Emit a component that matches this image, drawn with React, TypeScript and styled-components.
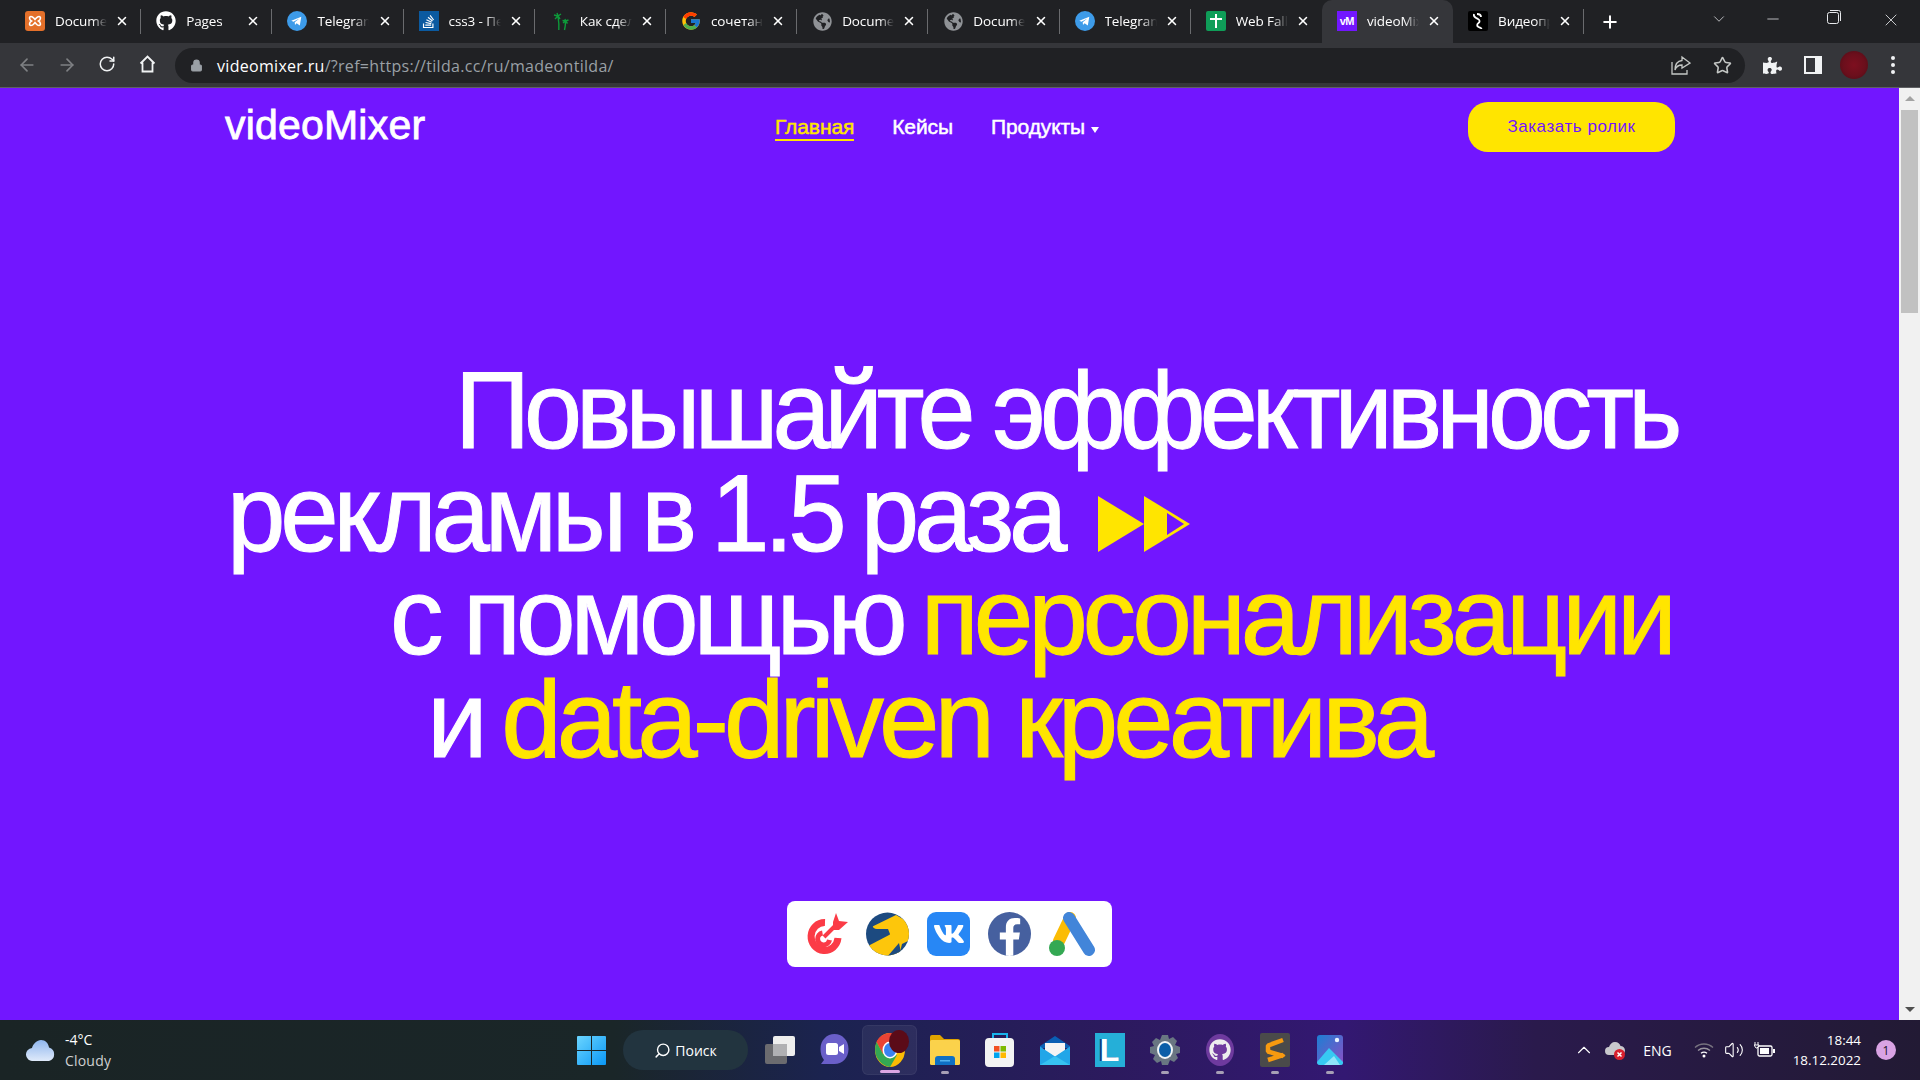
import React from "react";
import styled, { createGlobalStyle } from "styled-components";
import { FaGithub, FaVk, FaFacebookF, FaStackOverflow, FaGlobeAmericas, FaPuzzlePiece } from "react-icons/fa";
import { ArrowLeft, ArrowRight, RotateCw, Lock, Star, Plus, X, ChevronDown, ChevronUp, Minus, Volume2, Search } from "lucide-react";

const Global = createGlobalStyle`
  html, body { margin: 0; padding: 0; background: #7216ff; overflow: hidden; }
  * { box-sizing: border-box; }
`;
const Shell = styled.div`
  width: 1920px; height: 1080px; display: flex; flex-direction: column; overflow: hidden;
  font-family: "Open Sans", "Liberation Sans", sans-serif;
`;
const TabStrip = styled.div`
  height: 43px; background: #202124; display: flex; align-items: stretch; padding-left: 10px; flex: none;
`;
const Tab = styled.div<{ $active?: boolean; $sep?: boolean }>`
  width: 131.2px; flex: none; position: relative; display: flex; align-items: center; padding: 0 15px 1px 15px;
  color: #fff; font-size: 13.5px; background: ${p => (p.$active ? "#35363a" : "transparent")};
  border-radius: ${p => (p.$active ? "10px 10px 0 0" : "0")};
  &::after {
    content: ""; position: absolute; right: 0; top: 9px; height: 25px; width: 1px;
    background: ${p => (p.$sep ? "#6a6b6e" : "transparent")};
  }
`;
const Fav = styled.span`
  width: 20px; height: 20px; flex: none; display: flex; align-items: center; justify-content: center; margin-right: 10px;
`;
const TabTitle = styled.span`
  width: 52px; flex: none; overflow: hidden; white-space: nowrap; letter-spacing: -0.1px;
  -webkit-mask-image: linear-gradient(90deg, #000 72%, transparent 100%);
  mask-image: linear-gradient(90deg, #000 72%, transparent 100%);
`;
const TabClose = styled.span`
  display: flex; margin-left: auto; color: #fff; margin-right: -3px;
`;
const NewTab = styled.span`
  display: flex; align-items: center; margin-left: 16px; color: #fff;
`;
const WinControls = styled.div`
  margin-left: auto; display: flex; color: #e8eaed; align-items: flex-start; padding-top: 10px;
`;
const WinBtn = styled.span<{ $w: number }>`
  width: ${p => p.$w}px; display: flex; justify-content: center;
`;
const Toolbar = styled.div`
  height: 45px; background: #35363a; border-bottom: 1px solid #5f6063; display: flex; align-items: center; flex: none;
`;
const NavBtn = styled.span<{ $dim?: boolean }>`
  width: 40px; display: flex; justify-content: center; color: ${p => (p.$dim ? "#7f8184" : "#f1f3f4")};
`;
const NavButtons = styled.div`
  display: flex; padding-left: 7px; width: 175px;
`;
const Omnibox = styled.div`
  width: 1570px; height: 35px; border-radius: 18px; background: #202124; display: flex; align-items: center;
  padding: 0 13px 0 15px; font-size: 16px; color: #9aa0a6; flex: none;
`;
const Url = styled.span`
  margin-left: 14px; letter-spacing: 0.3px; white-space: nowrap; padding-top: 1px;
  b { font-weight: 400; color: #fff; }
`;
const OmniIcons = styled.div`
  margin-left: auto; display: flex; gap: 22px; align-items: center; color: #c4c7c5;
`;
const ToolIcons = styled.div`
  display: flex; align-items: center; margin-left: 18px; color: #f1f3f4; gap: 22px;
`;
const Avatar = styled.span`
  width: 28px; height: 28px; border-radius: 50%; margin-left: -4px;
  background: radial-gradient(circle, #7e0f1f 0%, #6b0f1c 55%, #4a0b14 100%);
`;
const Dots = styled.span`
  display: flex; flex-direction: column; gap: 3px; margin-left: 1px;
  i { width: 4px; height: 4px; border-radius: 50%; background: #f1f3f4; display: block; }
`;
const Viewport = styled.div`
  flex: 1; display: flex; background: #7216ff; min-height: 0;
`;
const Page = styled.main`
  flex: 1; min-width: 0; display: flex; flex-direction: column; padding: 14px 224px 0 225px; color: #fff;
  font-family: "Liberation Sans", Arial, sans-serif;
`;
const Header = styled.header`
  display: flex; align-items: flex-start; height: 50px; flex: none;
`;
const Logo = styled.div`
  width: 550px; font-size: 41px; line-height: 46px; letter-spacing: 0.2px; -webkit-text-stroke: 0.8px #fff;
`;
const Nav = styled.nav`
  display: flex; gap: 38px; font-size: 21px; padding-top: 14px;
`;
const NavLink = styled.a<{ $active?: boolean }>`
  color: ${p => (p.$active ? "#ffe500" : "#fff")}; line-height: 22px; height: 25px; letter-spacing: -0.1px;
  -webkit-text-stroke: 0.5px ${p => (p.$active ? "#ffe500" : "#fff")};
  border-bottom: 2px solid ${p => (p.$active ? "#ffe500" : "transparent")};
  display: flex; align-items: flex-start; gap: 6px;
`;
const Caret = styled.i`
  width: 0; height: 0; border-left: 4px solid transparent; border-right: 4px solid transparent;
  border-top: 6px solid #fff; margin-top: 11px;
`;
const OrderBtn = styled.button`
  margin-left: auto; width: 207px; height: 50px; border: 0; border-radius: 20px; background: #ffe500; color: #7216ff;
  font: 400 17px "Liberation Sans", Arial, sans-serif; letter-spacing: 0.55px; padding: 0;
`;
const Hero = styled.h1`
  margin: 207px 0 0; font-weight: 400; font-size: 109px; line-height: 103px; white-space: nowrap;
  -webkit-text-stroke: 1px currentColor;
  display: flex; flex-direction: column;
`;
const HeroLine = styled.span<{ $indent: number }>`
  margin-left: ${p => p.$indent}px; display: flex; align-items: center;
`;
const HeroText = styled.span<{ $track: number; $squeeze: number; $words?: number }>`
  display: inline-block; letter-spacing: ${p => p.$track}px; word-spacing: ${p => p.$words ?? 0}px;
  transform: scaleX(${p => p.$squeeze}); transform-origin: left center;
`;
const Yellow = styled.span`
  color: #ffe500; margin-left: 0.17em;
`;
const PlayArrows = styled.svg`
  width: 92px; height: 56px; margin-left: 5px; margin-top: 20px; flex: none;
`;
const LogoCard = styled.div`
  align-self: flex-start; margin: 130px 0 0 562px; width: 325px; height: 66px; background: #fff; border-radius: 8px;
  display: flex; align-items: center; padding-left: 18px; gap: 18px; flex: none;
`;
const Scrollbar = styled.div`
  width: 21px; flex: none; background: #f1f1f1; display: flex; flex-direction: column; align-items: center;
`;
const ScrollArrow = styled.i<{ $down?: boolean }>`
  height: 21px; width: 100%; flex: none; display: flex; align-items: center; justify-content: center;
  &::before {
    content: ""; width: 0; height: 0; border-left: 5px solid transparent; border-right: 5px solid transparent;
    ${p => (p.$down ? "border-top: 5px solid #505050;" : "border-bottom: 5px solid #a3a3a3;")}
  }
`;
const Thumb = styled.div`
  width: 17px; height: 203px; background: #c1c1c1; flex: none; margin-top: 1px;
`;
const ScrollSpacer = styled.div`
  flex: 1;
`;
const Taskbar = styled.footer`
  height: 60px; flex: none; display: flex; align-items: center; color: #fff;
  background: linear-gradient(90deg, #1a2425 0%, #1a2628 32%, #1b2350 43%, #2c1a5e 58%, #331872 70%, #2a1a4c 80%, #221a34 100%);
  font-family: "Open Sans", "Liberation Sans", sans-serif;
`;
const Weather = styled.div`
  width: 577px; flex: none; display: flex; align-items: center; padding-left: 26px; gap: 9px; font-size: 14px; line-height: 21px;
  small { font-size: 14px; color: #d0d0d0; display: block; letter-spacing: 0.2px; }
`;
const SearchPill = styled.div`
  width: 125px; height: 40px; border-radius: 20px; background: #22343f; margin-left: 17px; flex: none;
  display: flex; align-items: center; justify-content: center; gap: 4px; font-size: 14px;
`;
const Slots = styled.div`
  display: flex; margin-left: 4px;
`;
const Slot = styled.div<{ $active?: boolean; $mark?: "on" | "run" }>`
  width: 55px; height: 50px; flex: none; display: flex; align-items: center; justify-content: center; position: relative;
  ${p => (p.$active ? "background: rgba(255,255,255,.06); border-radius: 6px; border: 1px solid rgba(255,255,255,.05);" : "")}
  &::after {
    content: ""; position: absolute; bottom: 1px; left: 50%; height: 3px; border-radius: 2px; transform: translateX(-50%);
    width: ${p => (p.$mark === "on" ? "20px" : p.$mark === "run" ? "8px" : "0")};
    background: ${p => (p.$mark === "on" ? "#dca6e4" : "#a79fb5")};
  }
`;
const ChromeBadge = styled.span`
  position: absolute; top: 4px; left: 26px; width: 20px; height: 23px; border-radius: 50%; background: #5b0b18;
`;
const Tray = styled.div`
  margin-left: auto; display: flex; align-items: center; padding-right: 24px; font-size: 14px;
`;
const TrayIcon = styled.span<{ $ml: number }>`
  display: flex; margin-left: ${p => p.$ml}px; color: #fff;
`;
const Clock = styled.div`
  margin-left: 18px; text-align: right; line-height: 20px; font-size: 13.4px;
`;
const Badge = styled.span`
  width: 20px; height: 20px; border-radius: 50%; background: #d9a3e4; color: #1d1329; font-size: 12px;
  display: flex; align-items: center; justify-content: center; margin-left: 15px;
`;
const VmIcon = styled.span`
  width: 20px; height: 20px; background: #7216ff; color: #fff; font: 700 11px "Liberation Sans", sans-serif; display: flex; align-items: center; justify-content: center; letter-spacing: -0.5px;
`;
const SoBox = styled.span`
  width: 20px; height: 20px; background: #0b5aa0; color: #fff; display: flex; align-items: center; justify-content: center;
`;

const G = ({ s = 20 }: { s?: number }) => (
  <svg width={s} height={s} viewBox="0 0 48 48">
    <path fill="#FFC107" d="M43.6 20H24v8.500h11.300C33.700 33.300 29.300 36.500 24 36.500c-6.900 0-12.500-5.600-12.500-12.500S17.100 11.500 24 11.500c3.200 0 6 1.200 8.200 3.100l6-6C34.600 5.200 29.600 3 24 3 12.400 3 3 12.400 3 24s9.400 21 21 21 21-9.400 21-21c0-1.400-.1-2.700-.4-4z" />
    <path fill="#FF3D00" d="M5.400 14.200l7 5.100C14.300 14.700 18.800 11.500 24 11.500c3.200 0 6 1.200 8.200 3.100l6-6C34.600 5.200 29.600 3 24 3 16 3 9 7.600 5.400 14.200z" />
    <path fill="#4CAF50" d="M24 45c5.400 0 10.300-2.100 14-5.400l-6.500-5.500c-2.100 1.500-4.700 2.400-7.500 2.400-5.300 0-9.700-3.200-11.300-8l-6.900 5.300C9.300 40.300 16.100 45 24 45z" />
    <path fill="#1976D2" d="M43.600 20H24v8.500h11.300c-.8 2.200-2.200 4.200-3.900 5.600l6.500 5.500C41.700 36.100 45 30.600 45 24c0-1.400-.1-2.700-.4-4z" />
  </svg>
);
const Telegram = () => (
  <svg width="20" height="20" viewBox="0 0 20 20">
    <circle cx="10" cy="10" r="10" fill="#3d9be9" />
    <path d="M4.300 9.800l10-4-1.500 8.800-3.200-2.300-1.600 1.600-.3-2.700 4.700-3.800-5.900 3.300z" fill="#fff" />
  </svg>
);
const Xampp = () => (
  <svg width="20" height="20" viewBox="0 0 20 20">
    <rect width="20" height="20" rx="3" fill="#e4702a" />
    <path d="M6 5.500c2 0 2.500 1.500 4 3 1.500-1.500 2-3 4-3s2 3-.5 4.500c2.500 1.500 2.500 4.500.5 4.500s-2.500-1.500-4-3c-1.500 1.500-2 3-4 3s-2-3 .5-4.500C4 8.500 4 5.500 6 5.500z" fill="none" stroke="#fff" strokeWidth="1.600" />
  </svg>
);
const Palm = () => (
  <svg width="20" height="20" viewBox="0 0 20 20" fill="none" stroke="#0d9a3a" strokeWidth="1.400">
    <path d="M7 2l1 3 3-2M8 5L4 4M8 5L5 8M8 5l2 3M8 5c.6 4 1.200 9 .8 14" />
    <path d="M15 8l.5 2 3-1M15.500 10l-3-.5M15.500 10l-2.500 2M15.500 10l2 2.500M15.500 10c0 3-.3 6-1 9" />
  </svg>
);
const Sheets = () => (
  <svg width="20" height="20" viewBox="0 0 20 20">
    <rect width="20" height="20" rx="2" fill="#0f9d58" />
    <path d="M10 3v14M4 8h12" stroke="#fff" strokeWidth="2" />
  </svg>
);
const Squiggle = () => (
  <svg width="20" height="20" viewBox="0 0 20 20">
    <rect width="20" height="20" rx="2" fill="#000" />
    <path d="M6 3c-1 3 2 4 4 5s2 3 .5 4-2 3 0 4 3 1 3 2M9 3c1 0 4 0 4 3" fill="none" stroke="#fff" strokeWidth="1.800" />
  </svg>
);
const Home = () => (
  <svg width="17" height="18" viewBox="0 0 17 18" fill="none" stroke="#f1f3f4" strokeWidth="1.800">
    <path d="M1.500 8.500L8.500 1.500l7 7M3.500 7.500V16.500h10V7.500" />
  </svg>
);
const Share = () => (
  <svg width="20" height="20" viewBox="0 0 20 20" fill="none" stroke="#c4c7c5" strokeWidth="1.300">
    <path d="M1 7v12h15v-4" />
    <path d="M11 2l8 6-8 5V10C7 10 5 12 4 15c0-6 3-9 7-9.500z" />
  </svg>
);
const SidePanel = () => (
  <svg width="18" height="18" viewBox="0 0 18 18">
    <path fillRule="evenodd" d="M0 0h18v18H0zM2 2v14h9V2z" fill="#f1f3f4" />
  </svg>
);
const Restore = () => (
  <svg width="14" height="14" viewBox="0 0 14 14" fill="none" stroke="#e8eaed" strokeWidth="1">
    <rect x=".5" y="2.500" width="11" height="11" rx="2" />
    <path d="M3 .5h8.500a2 2 0 0 1 2 2V11" />
  </svg>
);
const Target = () => (
  <svg width="43" height="44" viewBox="0 0 43 44" fill="none">
    <path d="M20 10.500A13.500 14 0 1 0 33 26" stroke="#fb3b46" strokeWidth="7" />
    <path d="M17.500 21a6 6 0 1 0 7 7" stroke="#fb3b46" strokeWidth="5" />
    <path d="M19 25L34 10" stroke="#fb3b46" strokeWidth="4" />
    <path d="M28 10l3-9 3 8 9 1-9 8-6 0z" fill="#fb3b46" />
  </svg>
);
const Direct = () => (
  <svg width="43" height="44" viewBox="0 0 43 44">
    <defs><clipPath id="dc"><circle cx="21.500" cy="22" r="21.500" /></clipPath></defs>
    <circle cx="21.500" cy="22" r="21.500" fill="#1c4a80" />
    <path clipPath="url(#dc)" d="M7.500 14L30 3l14 8v17l-8 4-3 12H19l5-22-2-5H11c-4 0-5-3-3.500-3z" fill="#fdc60b" />
    <path clipPath="url(#dc)" d="M2 34L25 22l2 10-8 12H9z" fill="#fdc60b" />
    <path clipPath="url(#dc)" d="M21 45L33 31l3 14z" fill="#1c4a80" />
  </svg>
);
const VkTile = styled.span`
  width: 43px; height: 44px; border-radius: 9px; background: #2787f5; color: #fff; display: flex; align-items: center; justify-content: center; flex: none;
`;
const FbTile = styled.span`
  width: 43px; height: 44px; border-radius: 50%; background: #46609f; color: #fff; display: flex; align-items: flex-end; justify-content: center; overflow: hidden; flex: none;
`;
const Ads = () => (
  <svg width="48" height="44" viewBox="0 0 48 44">
    <path d="M21 6L10 29" stroke="#fbbc04" strokeWidth="12" strokeLinecap="round" />
    <path d="M20 6L40 38" stroke="#4285d9" strokeWidth="12" strokeLinecap="round" />
    <circle cx="8" cy="36" r="8" fill="#34a853" />
  </svg>
);
const WinLogo = () => (
  <svg width="29" height="29" viewBox="0 0 29 29" style={{ flex: "none" }}>
    <defs>
      <linearGradient id="wg" x1="0" y1="0" x2="1" y2="1">
        <stop offset="0" stopColor="#6bd5ff" />
        <stop offset="1" stopColor="#0a97f5" />
      </linearGradient>
    </defs>
    <path d="M0 1a1 1 0 0 1 1-1h13v14H0zM15 0h13a1 1 0 0 1 1 1v13H15zM0 15h14v14H1a1 1 0 0 1-1-1zM15 15h14v13a1 1 0 0 1-1 1H15z" fill="url(#wg)" />
  </svg>
);
const TaskView = () => (
  <svg width="30" height="28" viewBox="0 0 30 28">
    <rect x="0" y="8" width="22" height="20" rx="2" fill="#6b6b6f" />
    <rect x="8" y="0" width="22" height="20" rx="2" fill="#eeeeee" />
    <rect x="8" y="8" width="14" height="12" fill="#b0b0b3" />
  </svg>
);
const Chat = () => (
  <svg width="29" height="32" viewBox="0 0 29 32">
    <path d="M14.500 0C22 0 28.500 6 28.500 15S22 30 14.500 30H1l3-4C1.500 23 .5 19 .5 15 .5 6 7 0 14.500 0z" fill="#6a5fc9" />
    <rect x="6" y="9" width="12" height="12" rx="2.500" fill="#fff" />
    <path d="M19 13l5-3v10l-5-3z" fill="#fff" />
  </svg>
);
const Chrome = () => (
  <svg width="30" height="34" viewBox="0 0 30 34">
    <ellipse cx="15" cy="17" rx="15" ry="17" fill="#fbbc04" />
    <path d="M15 0C9 0 4 3.500 1.500 9L8 21l7-10h13.500C26 4 21 0 15 0z" fill="#ea4335" />
    <path d="M1.500 9C-.5 14-.5 21 2.500 25.500S9 33 15 34l7-12-7 1-7-2z" fill="#34a853" />
    <ellipse cx="15" cy="17" rx="7.500" ry="8.500" fill="#fff" />
    <ellipse cx="15" cy="17" rx="6" ry="7" fill="#3b82f0" />
  </svg>
);
const Folder = () => (
  <svg width="30" height="30" viewBox="0 0 30 30">
    <path d="M0 2a2 2 0 0 1 2-2h8l4 4h14a2 2 0 0 1 2 2v4H0z" fill="#e0a300" />
    <rect y="5" width="30" height="25" rx="1.500" fill="#fbd24b" />
    <path d="M5 30v-6a3 3 0 0 1 3-3h14a3 3 0 0 1 3 3v6z" fill="#0f70c4" />
    <rect x="10" y="25" width="10" height="1.500" fill="#53b2ee" />
  </svg>
);
const Store = () => (
  <svg width="30" height="34" viewBox="0 0 30 34">
    <path d="M8 6V1h14v5" fill="none" stroke="#19b5ec" strokeWidth="2" />
    <rect y="5" width="29" height="29" rx="4" fill="#f3f3f3" />
    <rect x="9" y="13" width="5.500" height="5.500" fill="#f25022" />
    <rect x="15.500" y="13" width="5.500" height="5.500" fill="#7fba00" />
    <rect x="9" y="19.500" width="5.500" height="5.500" fill="#00a4ef" />
    <rect x="15.500" y="19.500" width="5.500" height="5.500" fill="#ffb900" />
  </svg>
);
const Mail = () => (
  <svg width="30" height="29" viewBox="0 0 30 29">
    <path d="M15 0l15 10v2H0v-2z" fill="#0a5fb4" />
    <path d="M5 7h20v8l-10 6-10-6z" fill="#f4f4f4" />
    <path d="M0 10.500l15 10 15-10V29H0z" fill="#22a6e8" />
    <path d="M0 29l15-9 15 9z" fill="#37c2f2" />
  </svg>
);
const LTile = styled.span`
  width: 30px; height: 34px; background: #25afd8; color: #fff; font: 700 32px/34px "Liberation Sans", sans-serif; display: flex; justify-content: center; text-shadow: -2px 0 0 #0b3f83;
`;
const Gear = () => (
  <svg width="30" height="30" viewBox="0 0 30 30">
    <path d="M12 0h6l1 4 4-2 4 4-2 4 5 2v6l-4 1 2 4-4 4-4-2-2 5h-6l-1-4-4 2-4-4 2-4-5-2v-6l4-1-2-4 4-4 4 2z" fill="#697682" />
    <ellipse cx="15" cy="15" rx="8" ry="9" fill="#f0f5f7" />
    <ellipse cx="15" cy="15" rx="6" ry="7" fill="#0a5ea8" />
  </svg>
);
const GhTile = styled.span`
  width: 28px; height: 32px; border-radius: 50%; background: #6e3a9e; color: #eee; display: flex; align-items: center; justify-content: center;
`;
const Sublime = () => (
  <svg width="30" height="34" viewBox="0 0 30 34">
    <rect width="30" height="34" rx="2" fill="#4a4a4a" />
    <path d="M23 7L8 12.500v6L23 23v-1L8 27" fill="none" stroke="#f79a10" strokeWidth="4.500" strokeLinejoin="bevel" />
  </svg>
);
const Photos = () => (
  <svg width="26" height="30" viewBox="0 0 26 30">
    <defs>
      <linearGradient id="ph" x1="0" y1="0" x2="1" y2="1">
        <stop offset="0" stopColor="#1c7fd4" />
        <stop offset="1" stopColor="#8b4fc4" />
      </linearGradient>
    </defs>
    <rect width="26" height="30" rx="3" fill="url(#ph)" />
    <circle cx="20" cy="5" r="2.200" fill="#e8f4ff" />
    <path d="M0 27l12-14 14 14v1a2 2 0 0 1-2 2H3a3 3 0 0 1-3-3z" fill="#37c9f2" />
    <path d="M7 30l10-9 6 9z" fill="#8fe5fa" />
  </svg>
);
const CloudIcon = () => (
  <svg width="30" height="21" viewBox="0 0 30 21">
    <defs>
      <linearGradient id="cl" x1="0" y1="0" x2="0" y2="1">
        <stop offset="0" stopColor="#8fb6ee" />
        <stop offset="1" stopColor="#dfeafa" />
      </linearGradient>
    </defs>
    <path d="M7 21a6.500 6.500 0 0 1-1-13c1-4 5-8 9-8 4.500 0 7.500 3.500 8 7.500a7 7 0 0 1 0 13.500z" fill="url(#cl)" />
  </svg>
);
const TrayCloud = () => (
  <svg width="20" height="19" viewBox="0 0 20 19">
    <path d="M4 14a4 4 0 0 1 0-8c1-3 3-5 6-5s5 2 5.500 4a4 4 0 0 1 0 9z" fill="#c8c8cc" />
    <circle cx="14.500" cy="13.500" r="5.500" fill="#d7202e" />
    <path d="M12.500 11.500l4 4m0-4l-4 4" stroke="#fff" strokeWidth="1.500" />
  </svg>
);
const WifiIcon = () => (
  <svg width="20" height="16" viewBox="0 0 20 16" fill="none" strokeWidth="1.300">
    <path d="M1 5.500C6 .8 14 .8 19 5.500" stroke="#77737f" />
    <path d="M4 8.500c3.500-3 8.500-3 12 0" stroke="#99959f" />
    <path d="M7 11.300c2-1.500 4-1.500 6 0" stroke="#fff" />
    <circle cx="10" cy="14" r="1.500" fill="#fff" />
  </svg>
);
const Battery = () => (
  <svg width="21" height="16" viewBox="0 0 21 16" fill="none">
    <rect x="4" y="4" width="14" height="10" rx="1.500" stroke="#fff" strokeWidth="1.300" />
    <rect x="6" y="6" width="9" height="6" fill="#fff" />
    <rect x="19" y="7" width="2" height="4" fill="#fff" />
    <path d="M1 0v3M4 0v3M0 3h5v1l-2 2H2z" stroke="#fff" strokeWidth="1" />
  </svg>
);

const tabs: { icon: React.ReactNode; title: string; active?: boolean; sep?: boolean }[] = [
  { icon: <Xampp />, title: "Documents", sep: true },
  { icon: <FaGithub size={20} color="#fff" />, title: "Pages", sep: true },
  { icon: <Telegram />, title: "Telegram", sep: true },
  { icon: <SoBox><FaStackOverflow size={15} /></SoBox>, title: "css3 - Перенос", sep: true },
  { icon: <Palm />, title: "Как сделать", sep: true },
  { icon: <G />, title: "сочетание", sep: true },
  { icon: <FaGlobeAmericas size={19} color="#8f9296" />, title: "Documents", sep: true },
  { icon: <FaGlobeAmericas size={19} color="#8f9296" />, title: "Documents", sep: true },
  { icon: <Telegram />, title: "Telegram", sep: true },
  { icon: <Sheets />, title: "Web Fallback" },
  { icon: <VmIcon>vM</VmIcon>, title: "videoMixer", active: true },
  { icon: <Squiggle />, title: "Видеопродакшн", sep: true },
];

export default function App() {
  return (
    <Shell>
      <Global />
      <TabStrip>
        {tabs.map((t, i) => (
          <Tab key={i} $active={t.active} $sep={t.sep}>
            <Fav>{t.icon}</Fav>
            <TabTitle>{t.title}</TabTitle>
            <TabClose><X size={14} strokeWidth={2.6} /></TabClose>
          </Tab>
        ))}
        <NewTab><Plus size={20} strokeWidth={2.4} /></NewTab>
        <WinControls>
          <WinBtn $w={40}><ChevronDown size={18} strokeWidth={1} /></WinBtn>
          <WinBtn $w={67}><Minus size={18} strokeWidth={1} /></WinBtn>
          <WinBtn $w={56}><Restore /></WinBtn>
          <WinBtn $w={58}><X size={20} strokeWidth={1} /></WinBtn>
        </WinControls>
      </TabStrip>
      <Toolbar>
        <NavButtons>
          <NavBtn $dim><ArrowLeft size={20} strokeWidth={2} /></NavBtn>
          <NavBtn $dim><ArrowRight size={20} strokeWidth={2} /></NavBtn>
          <NavBtn><RotateCw size={18} strokeWidth={2} /></NavBtn>
          <NavBtn><Home /></NavBtn>
        </NavButtons>
        <Omnibox>
          <Lock size={13} fill="#9aa0a6" strokeWidth={2} />
          <Url><b>videomixer.ru</b>/?ref=https://tilda.cc/ru/madeontilda/</Url>
          <OmniIcons>
            <Share />
            <Star size={19} strokeWidth={2} />
          </OmniIcons>
        </Omnibox>
        <ToolIcons>
          <FaPuzzlePiece size={19} />
          <SidePanel />
          <Avatar />
          <Dots><i /><i /><i /></Dots>
        </ToolIcons>
      </Toolbar>
      <Viewport>
        <Page>
          <Header>
            <Logo>videoMixer</Logo>
            <Nav>
              <NavLink $active>Главная</NavLink>
              <NavLink>Кейсы</NavLink>
              <NavLink>Продукты <Caret /></NavLink>
            </Nav>
            <OrderBtn>Заказать ролик</OrderBtn>
          </Header>
          <Hero>
            <HeroLine $indent={230}>
              <HeroText $track={-6.2} $squeeze={0.957}>Повышайте эффективность</HeroText>
            </HeroLine>
            <HeroLine $indent={2}>
              <HeroText $track={-5.4} $squeeze={0.964} $words={-5}>рекламы в 1.5 раза</HeroText>
              <PlayArrows viewBox="0 0 92 56">
                <path d="M0 0l46 28L0 56z" fill="#ffe500" />
                <path d="M46 0l46 28-46 28z" fill="#ffe500" />
                <path d="M69 17L86 28 69 39z" fill="#7216ff" />
              </PlayArrows>
            </HeroLine>
            <HeroLine $indent={165}>
              <HeroText $track={-5.2} $squeeze={0.983}>с помощью<Yellow>персонализации</Yellow></HeroText>
            </HeroLine>
            <HeroLine $indent={202}>
              <HeroText $track={-5} $squeeze={0.997}>и<Yellow>data-driven креатива</Yellow></HeroText>
            </HeroLine>
          </Hero>
          <LogoCard>
            <Target />
            <Direct />
            <VkTile><FaVk size={32} /></VkTile>
            <FbTile><FaFacebookF size={38} /></FbTile>
            <Ads />
          </LogoCard>
        </Page>
        <Scrollbar>
          <ScrollArrow />
          <Thumb />
          <ScrollSpacer />
          <ScrollArrow $down />
        </Scrollbar>
      </Viewport>
      <Taskbar>
        <Weather>
          <CloudIcon />
          <div>-4°C<small>Cloudy</small></div>
        </Weather>
        <WinLogo />
        <SearchPill><Search size={17} strokeWidth={2} style={{ transform: "scaleX(-1)" }} />Поиск</SearchPill>
        <Slots>
          <Slot><TaskView /></Slot>
          <Slot><Chat /></Slot>
          <Slot $active $mark="on"><Chrome /><ChromeBadge /></Slot>
          <Slot $mark="run"><Folder /></Slot>
          <Slot><Store /></Slot>
          <Slot><Mail /></Slot>
          <Slot><LTile>L</LTile></Slot>
          <Slot $mark="run"><Gear /></Slot>
          <Slot $mark="run"><GhTile><FaGithub size={22} /></GhTile></Slot>
          <Slot $mark="run"><Sublime /></Slot>
          <Slot $mark="run"><Photos /></Slot>
        </Slots>
        <Tray>
          <TrayIcon $ml={0}><ChevronUp size={22} strokeWidth={1.2} /></TrayIcon>
          <TrayIcon $ml={10}><TrayCloud /></TrayIcon>
          <TrayIcon $ml={18}>ENG</TrayIcon>
          <TrayIcon $ml={22}><WifiIcon /></TrayIcon>
          <TrayIcon $ml={10}><Volume2 size={20} strokeWidth={1.3} /></TrayIcon>
          <TrayIcon $ml={10}><Battery /></TrayIcon>
          <Clock>18:44<br />18.12.2022</Clock>
          <Badge>1</Badge>
        </Tray>
      </Taskbar>
    </Shell>
  );
}
